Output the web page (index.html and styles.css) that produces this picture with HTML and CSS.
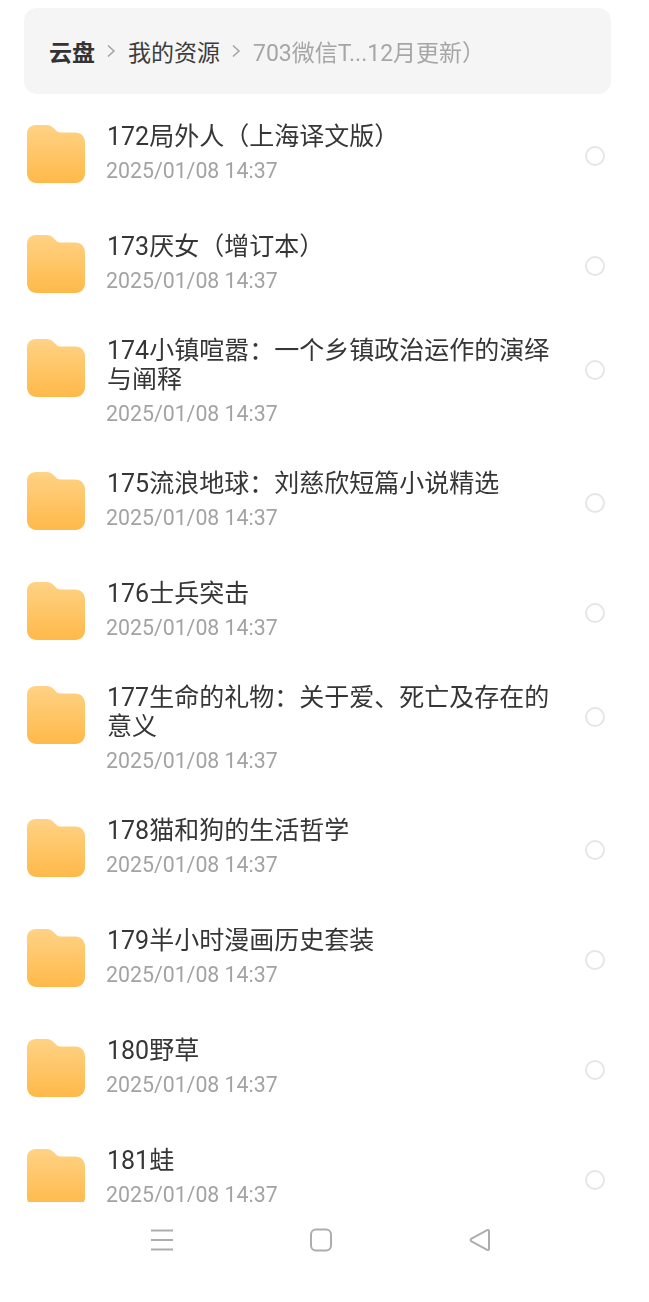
FILE: index.html
```html
<!DOCTYPE html>
<html lang="zh-CN">
<head>
<meta charset="utf-8">
<title>云盘</title>
<link rel="stylesheet" href="styles.css">
</head>
<body>
<svg class="defs" width="0" height="0" aria-hidden="true">
  <defs>
    <linearGradient id="folderFill" x1="0" y1="0" x2="0" y2="1">
      <stop offset="0" stop-color="#ffd285"/>
      <stop offset="1" stop-color="#ffb949"/>
    </linearGradient>
    <symbol id="folder" viewBox="0 0 58 58">
      <path fill="url(#folderFill)" d="M9 0H19C23 0 25 1.500 27.500 4C29.500 6.500 31 7.500 34 7.500H48C54 7.500 58 11.500 58 17.500V48C58 54 54 58 48 58H10C4 58 0 54 0 48V9C0 3.500 3.500 0 9 0Z"/>
    </symbol>
  </defs>
</svg>
<main class="screen">
  <nav class="crumbs">
    <span class="crumb crumb-root">云盘</span>
    <svg class="chev" viewBox="0 0 10 14"><path d="M2 1.500L8 7L2 12.500"/></svg>
    <span class="crumb">我的资源</span>
    <svg class="chev" viewBox="0 0 10 14"><path d="M2 1.500L8 7L2 12.500"/></svg>
    <span class="crumb crumb-current">703微信T...12月更新）</span>
  </nav>
  <ul class="list">
    <li class="row"><svg class="folder"><use href="#folder"/></svg><div class="info"><div class="name">172局外人（上海译文版）</div><div class="date">2025/01/08 14:37</div></div><span class="radio"></span></li>
    <li class="row"><svg class="folder"><use href="#folder"/></svg><div class="info"><div class="name">173厌女（增订本）</div><div class="date">2025/01/08 14:37</div></div><span class="radio"></span></li>
    <li class="row row-tall"><svg class="folder"><use href="#folder"/></svg><div class="info"><div class="name">174小镇喧嚣：一个乡镇政治运作的演绎与阐释</div><div class="date">2025/01/08 14:37</div></div><span class="radio"></span></li>
    <li class="row"><svg class="folder"><use href="#folder"/></svg><div class="info"><div class="name">175流浪地球：刘慈欣短篇小说精选</div><div class="date">2025/01/08 14:37</div></div><span class="radio"></span></li>
    <li class="row"><svg class="folder"><use href="#folder"/></svg><div class="info"><div class="name">176士兵突击</div><div class="date">2025/01/08 14:37</div></div><span class="radio"></span></li>
    <li class="row row-tall"><svg class="folder"><use href="#folder"/></svg><div class="info"><div class="name">177生命的礼物：关于爱、死亡及存在的意义</div><div class="date">2025/01/08 14:37</div></div><span class="radio"></span></li>
    <li class="row"><svg class="folder"><use href="#folder"/></svg><div class="info"><div class="name">178猫和狗的生活哲学</div><div class="date">2025/01/08 14:37</div></div><span class="radio"></span></li>
    <li class="row"><svg class="folder"><use href="#folder"/></svg><div class="info"><div class="name">179半小时漫画历史套装</div><div class="date">2025/01/08 14:37</div></div><span class="radio"></span></li>
    <li class="row"><svg class="folder"><use href="#folder"/></svg><div class="info"><div class="name">180野草</div><div class="date">2025/01/08 14:37</div></div><span class="radio"></span></li>
    <li class="row"><svg class="folder"><use href="#folder"/></svg><div class="info"><div class="name">181蛙</div><div class="date">2025/01/08 14:37</div></div><span class="radio"></span></li>
  </ul>
  <footer class="navbar">
    <svg class="nav-icon" viewBox="0 0 24 24"><path d="M1 2.500H23M1 12H23M1 21.500H23"/></svg>
    <svg class="nav-icon" viewBox="0 0 24 24"><rect x="2" y="1.500" width="20" height="21" rx="5"/></svg>
    <svg class="nav-icon" viewBox="0 0 24 24"><path d="M21 3.200C21 2 20.200 1.600 19.200 2.100L3.500 10.700C2.300 11.400 2.300 12.600 3.500 13.300L19.200 21.900C20.200 22.400 21 22 21 20.800Z"/></svg>
  </footer>
</main>
</body>
</html>
```
FILE: styles.css
```css
* {
  box-sizing: border-box;
}

html,
body {
  margin: 0;
  padding: 0;
  background: #fff;
}

.defs {
  position: absolute;
}

.screen {
  display: flex;
  flex-direction: column;
  width: 649px;
  height: 1302px;
  overflow: hidden;
  padding-top: 8px;
  font-family: Roboto, "Noto Sans CJK SC", sans-serif;
  filter: blur(0.5px);
}

.crumbs {
  display: flex;
  flex: none;
  align-items: center;
  width: 587px;
  height: 86px;
  margin: 0 0 6px 24px;
  padding: 5px 0 0 25px;
  background: #f5f5f6;
  border-radius: 13px;
  font-size: 23px;
  line-height: 30px;
}

.crumb {
  color: #3c3c3c;
  white-space: nowrap;
}

.crumb-root {
  font-weight: 700;
  color: #333;
}

.crumb-current {
  color: #a6a6a6;
}

.chev {
  flex: none;
  width: 10px;
  height: 14px;
  margin: -6px 12px 0 11px;
  fill: none;
  stroke: #a2a2a2;
  stroke-width: 1.500;
}

.list {
  flex: none;
  height: 1102px;
  margin: 0;
  padding: 0;
  overflow: hidden;
  list-style: none;
}

.row {
  display: flex;
  align-items: flex-start;
  height: 110px;
  padding: 21px 0 0 27px;
}

.row-tall {
  height: 127px;
  padding-top: 15px;
}

.folder {
  flex: none;
  width: 58px;
  height: 58px;
  margin-top: 4px;
}

.info {
  flex: none;
  width: 452px;
  margin: 1px 0 0 22px;
}

.name {
  font-size: 25px;
  line-height: 29px;
  color: #363636;
}

.date {
  margin: 6px 0 0 -1px;
  font-size: 21.300px;
  line-height: 28px;
  color: #a3a3a3;
}

.radio {
  flex: none;
  width: 20px;
  height: 20px;
  margin: 25px 0 0 26px;
  border: 2px solid #e6e6e6;
  border-radius: 50%;
}

.navbar {
  display: flex;
  flex: none;
  justify-content: center;
  gap: 135px;
  height: 100px;
  padding: 26px 8px 0 0;
}

.nav-icon {
  flex: none;
  width: 24px;
  height: 24px;
  fill: none;
  stroke: #adadad;
  stroke-width: 2;
}
```
